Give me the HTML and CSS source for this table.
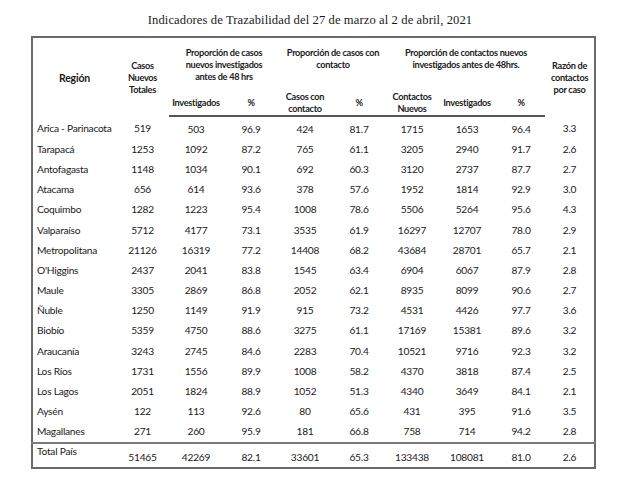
FILE: index.html
```html
<!DOCTYPE html>
<html lang="es">
<head>
<meta charset="utf-8">
<title>Indicadores de Trazabilidad</title>
<link rel="stylesheet" href="styles.css">
</head>
<body>
<div class="page">
  <h1 class="title">Indicadores de Trazabilidad del 27 de marzo al 2 de abril, 2021</h1>
  <table class="tbl">
    <colgroup>
      <col class="c1"><col class="c2"><col class="c3"><col class="c4"><col class="c5">
      <col class="c6"><col class="c7"><col class="c8"><col class="c9"><col class="c10">
    </colgroup>
    <thead>
      <tr class="h1">
        <th rowspan="2" class="region-h">Región</th>
        <th rowspan="2" class="mid">Casos<br>Nuevos<br>Totales</th>
        <th colspan="2" class="grp">Proporción de casos<br>nuevos investigados<br>antes de 48 hrs</th>
        <th colspan="2" class="grp">Proporción de casos con<br>contacto</th>
        <th colspan="3" class="grp">Proporción de contactos nuevos<br>investigados antes de 48hrs.</th>
        <th rowspan="2" class="mid">Razón de<br>contactos<br>por caso</th>
      </tr>
      <tr class="h2">
        <th>Investigados</th>
        <th>%</th>
        <th>Casos con<br>contacto</th>
        <th>%</th>
        <th>Contactos<br>Nuevos</th>
        <th>Investigados</th>
        <th>%</th>
      </tr>
    </thead>
    <tbody>
      <tr><td class="reg">Arica - Parinacota</td><td>519</td><td>503</td><td>96.9</td><td>424</td><td>81.7</td><td>1715</td><td>1653</td><td>96.4</td><td>3.3</td></tr>
      <tr><td class="reg">Tarapacá</td><td>1253</td><td>1092</td><td>87.2</td><td>765</td><td>61.1</td><td>3205</td><td>2940</td><td>91.7</td><td>2.6</td></tr>
      <tr><td class="reg">Antofagasta</td><td>1148</td><td>1034</td><td>90.1</td><td>692</td><td>60.3</td><td>3120</td><td>2737</td><td>87.7</td><td>2.7</td></tr>
      <tr><td class="reg">Atacama</td><td>656</td><td>614</td><td>93.6</td><td>378</td><td>57.6</td><td>1952</td><td>1814</td><td>92.9</td><td>3.0</td></tr>
      <tr><td class="reg">Coquimbo</td><td>1282</td><td>1223</td><td>95.4</td><td>1008</td><td>78.6</td><td>5506</td><td>5264</td><td>95.6</td><td>4.3</td></tr>
      <tr><td class="reg">Valparaíso</td><td>5712</td><td>4177</td><td>73.1</td><td>3535</td><td>61.9</td><td>16297</td><td>12707</td><td>78.0</td><td>2.9</td></tr>
      <tr><td class="reg">Metropolitana</td><td>21126</td><td>16319</td><td>77.2</td><td>14408</td><td>68.2</td><td>43684</td><td>28701</td><td>65.7</td><td>2.1</td></tr>
      <tr><td class="reg">O'Higgins</td><td>2437</td><td>2041</td><td>83.8</td><td>1545</td><td>63.4</td><td>6904</td><td>6067</td><td>87.9</td><td>2.8</td></tr>
      <tr><td class="reg">Maule</td><td>3305</td><td>2869</td><td>86.8</td><td>2052</td><td>62.1</td><td>8935</td><td>8099</td><td>90.6</td><td>2.7</td></tr>
      <tr><td class="reg">Ñuble</td><td>1250</td><td>1149</td><td>91.9</td><td>915</td><td>73.2</td><td>4531</td><td>4426</td><td>97.7</td><td>3.6</td></tr>
      <tr><td class="reg">Biobío</td><td>5359</td><td>4750</td><td>88.6</td><td>3275</td><td>61.1</td><td>17169</td><td>15381</td><td>89.6</td><td>3.2</td></tr>
      <tr><td class="reg">Araucanía</td><td>3243</td><td>2745</td><td>84.6</td><td>2283</td><td>70.4</td><td>10521</td><td>9716</td><td>92.3</td><td>3.2</td></tr>
      <tr><td class="reg">Los Ríos</td><td>1731</td><td>1556</td><td>89.9</td><td>1008</td><td>58.2</td><td>4370</td><td>3818</td><td>87.4</td><td>2.5</td></tr>
      <tr><td class="reg">Los Lagos</td><td>2051</td><td>1824</td><td>88.9</td><td>1052</td><td>51.3</td><td>4340</td><td>3649</td><td>84.1</td><td>2.1</td></tr>
      <tr><td class="reg">Aysén</td><td>122</td><td>113</td><td>92.6</td><td>80</td><td>65.6</td><td>431</td><td>395</td><td>91.6</td><td>3.5</td></tr>
      <tr><td class="reg">Magallanes</td><td>271</td><td>260</td><td>95.9</td><td>181</td><td>66.8</td><td>758</td><td>714</td><td>94.2</td><td>2.8</td></tr>
    </tbody>
    <tfoot>
      <tr class="total"><td class="reg">Total País</td><td>51465</td><td>42269</td><td>82.1</td><td>33601</td><td>65.3</td><td>133438</td><td>108081</td><td>81.0</td><td>2.6</td></tr>
    </tfoot>
  </table>
</div>
</body>
</html>
```

FILE: styles.css
```css
html, body {
  margin: 0;
  padding: 0;
  background: #ffffff;
}

.page {
  width: 620px;
  height: 488px;
  padding-top: 12px;
  box-sizing: border-box;
}

.title {
  margin: 0 0 8px 0;
  text-align: center;
  font-family: "Liberation Serif", "DejaVu Serif", serif;
  font-weight: normal;
  font-size: 12.6px;
  line-height: 16px;
  letter-spacing: 0.1px;
  color: #1a1a1a;
}

.tbl {
  margin-left: 31px;
  width: 563px;
  table-layout: fixed;
  border-collapse: collapse;
  border: 2px solid #6a6a6a;
  font-family: Lato, "Liberation Sans", sans-serif;
  color: #1a1a1a;
}

.c1 { width: 84px; }
.c2 { width: 53px; }
.c3 { width: 54px; }
.c4 { width: 56px; }
.c5 { width: 52px; }
.c6 { width: 56px; }
.c7 { width: 50px; }
.c8 { width: 60px; }
.c9 { width: 48px; }
.c10 { width: 50px; }

thead th {
  font-size: 9.2px;
  font-weight: bold;
  line-height: 12px;
  letter-spacing: -0.3px;
  text-align: center;
  padding: 0;
  white-space: nowrap;
}

.h1 { height: 50px; }
.h1 .grp { vertical-align: top; padding-top: 9px; }
.h1 .mid { vertical-align: middle; padding-top: 1px; }
.h1 .region-h { font-size: 10.5px; vertical-align: middle; letter-spacing: -0.2px; padding-top: 1px; }
.h2 { height: 29px; }
.h2 th { vertical-align: middle; padding-top: 3px; padding-bottom: 0; }

thead tr.h2 th { border-bottom: 2px solid #555; }

tbody td, tfoot td {
  font-size: 10.2px;
  letter-spacing: -0.25px;
  text-align: center;
  padding: 0;
  height: 20.2px;
  line-height: 13px;
  vertical-align: middle;
  white-space: nowrap;
}

td.reg {
  text-align: left;
  padding-left: 4px;
}

tbody tr:first-child td { padding-top: 2px; }

.total td {
  border-top: 2px solid #7a7a7a;
  height: 20px;
  vertical-align: bottom;
  padding-bottom: 3px;
}

.total td.reg {
  vertical-align: top;
  padding-top: 1px;
  padding-bottom: 0;
}
```
